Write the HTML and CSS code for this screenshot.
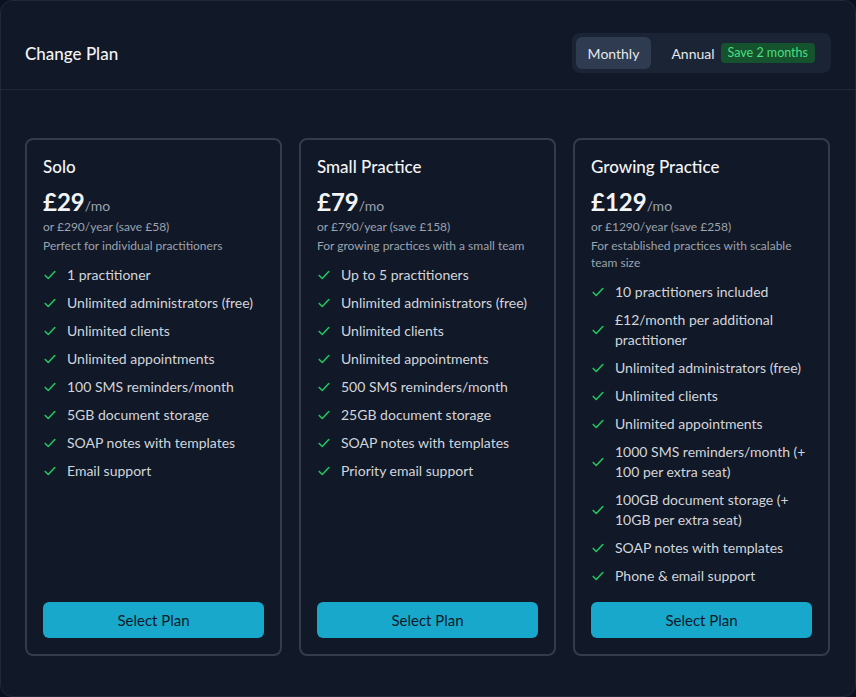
FILE: index.html
```html
<!DOCTYPE html>
<html lang="en">
<head>
    <meta charset="UTF-8">
    <meta name="viewport" content="width=device-width, initial-scale=1.0">
    <title>Change Plan</title>
    <link rel="stylesheet" href="styles.css">
</head>
<body>
    <div class="modal" role="dialog" aria-label="Change Plan">
        <div class="modal-header">
            <h2 class="modal-title">Change Plan</h2>
            <div class="billing-toggle" role="group" aria-label="Billing period">
                <button class="billing-option active">Monthly</button>
                <button class="billing-option">Annual <span class="save-badge">Save 2 months</span></button>
            </div>
        </div>

        <div class="plans">
            <div class="plan-card">
                <h3 class="plan-name">Solo</h3>
                <div class="plan-price">£29<span class="per">/mo</span></div>
                <p class="plan-yearly">or £290/year (save £58)</p>
                <p class="plan-desc">Perfect for individual practitioners</p>
                <ul class="features">
                    <li><svg class="check" viewBox="0 0 16 16"><path d="M2.5 8.5l3.5 3.5 7.5-8"/></svg><span>1 practitioner</span></li>
                    <li><svg class="check" viewBox="0 0 16 16"><path d="M2.5 8.5l3.5 3.5 7.5-8"/></svg><span>Unlimited administrators (free)</span></li>
                    <li><svg class="check" viewBox="0 0 16 16"><path d="M2.5 8.5l3.5 3.5 7.5-8"/></svg><span>Unlimited clients</span></li>
                    <li><svg class="check" viewBox="0 0 16 16"><path d="M2.5 8.5l3.5 3.5 7.5-8"/></svg><span>Unlimited appointments</span></li>
                    <li><svg class="check" viewBox="0 0 16 16"><path d="M2.5 8.5l3.5 3.5 7.5-8"/></svg><span>100 SMS reminders/month</span></li>
                    <li><svg class="check" viewBox="0 0 16 16"><path d="M2.5 8.5l3.5 3.5 7.5-8"/></svg><span>5GB document storage</span></li>
                    <li><svg class="check" viewBox="0 0 16 16"><path d="M2.5 8.5l3.5 3.5 7.5-8"/></svg><span>SOAP notes with templates</span></li>
                    <li><svg class="check" viewBox="0 0 16 16"><path d="M2.5 8.5l3.5 3.5 7.5-8"/></svg><span>Email support</span></li>
                </ul>
                <button class="select-btn">Select Plan</button>
            </div>

            <div class="plan-card">
                <h3 class="plan-name">Small Practice</h3>
                <div class="plan-price">£79<span class="per">/mo</span></div>
                <p class="plan-yearly">or £790/year (save £158)</p>
                <p class="plan-desc">For growing practices with a small team</p>
                <ul class="features">
                    <li><svg class="check" viewBox="0 0 16 16"><path d="M2.5 8.5l3.5 3.5 7.5-8"/></svg><span>Up to 5 practitioners</span></li>
                    <li><svg class="check" viewBox="0 0 16 16"><path d="M2.5 8.5l3.5 3.5 7.5-8"/></svg><span>Unlimited administrators (free)</span></li>
                    <li><svg class="check" viewBox="0 0 16 16"><path d="M2.5 8.5l3.5 3.5 7.5-8"/></svg><span>Unlimited clients</span></li>
                    <li><svg class="check" viewBox="0 0 16 16"><path d="M2.5 8.5l3.5 3.5 7.5-8"/></svg><span>Unlimited appointments</span></li>
                    <li><svg class="check" viewBox="0 0 16 16"><path d="M2.5 8.5l3.5 3.5 7.5-8"/></svg><span>500 SMS reminders/month</span></li>
                    <li><svg class="check" viewBox="0 0 16 16"><path d="M2.5 8.5l3.5 3.5 7.5-8"/></svg><span>25GB document storage</span></li>
                    <li><svg class="check" viewBox="0 0 16 16"><path d="M2.5 8.5l3.5 3.5 7.5-8"/></svg><span>SOAP notes with templates</span></li>
                    <li><svg class="check" viewBox="0 0 16 16"><path d="M2.5 8.5l3.5 3.5 7.5-8"/></svg><span>Priority email support</span></li>
                </ul>
                <button class="select-btn">Select Plan</button>
            </div>

            <div class="plan-card">
                <h3 class="plan-name">Growing Practice</h3>
                <div class="plan-price">£129<span class="per">/mo</span></div>
                <p class="plan-yearly">or £1290/year (save £258)</p>
                <p class="plan-desc">For established practices with scalable team size</p>
                <ul class="features">
                    <li><svg class="check" viewBox="0 0 16 16"><path d="M2.5 8.5l3.5 3.5 7.5-8"/></svg><span>10 practitioners included</span></li>
                    <li><svg class="check" viewBox="0 0 16 16"><path d="M2.5 8.5l3.5 3.5 7.5-8"/></svg><span>£12/month per additional practitioner</span></li>
                    <li><svg class="check" viewBox="0 0 16 16"><path d="M2.5 8.5l3.5 3.5 7.5-8"/></svg><span>Unlimited administrators (free)</span></li>
                    <li><svg class="check" viewBox="0 0 16 16"><path d="M2.5 8.5l3.5 3.5 7.5-8"/></svg><span>Unlimited clients</span></li>
                    <li><svg class="check" viewBox="0 0 16 16"><path d="M2.5 8.5l3.5 3.5 7.5-8"/></svg><span>Unlimited appointments</span></li>
                    <li><svg class="check" viewBox="0 0 16 16"><path d="M2.5 8.5l3.5 3.5 7.5-8"/></svg><span>1000 SMS reminders/month (+ 100 per extra seat)</span></li>
                    <li><svg class="check" viewBox="0 0 16 16"><path d="M2.5 8.5l3.5 3.5 7.5-8"/></svg><span>100GB document storage (+ 10GB per extra seat)</span></li>
                    <li><svg class="check" viewBox="0 0 16 16"><path d="M2.5 8.5l3.5 3.5 7.5-8"/></svg><span>SOAP notes with templates</span></li>
                    <li><svg class="check" viewBox="0 0 16 16"><path d="M2.5 8.5l3.5 3.5 7.5-8"/></svg><span>Phone &amp; email support</span></li>
                </ul>
                <button class="select-btn">Select Plan</button>
            </div>
        </div>
    </div>
</body>
</html>
```

FILE: styles.css
```css
* {
    box-sizing: border-box;
}

html, body {
    margin: 0;
    padding: 0;
    background-color: #0b1120;
}

body {
    font-family: Lato, "Noto Sans", sans-serif;
    color: #f3f4f6;
}

.modal {
    width: 856px;
    height: 697px;
    background-color: #111827;
    border: 1px solid #1f2937;
    border-radius: 12px;
    overflow: hidden;
}

.modal-header {
    display: flex;
    justify-content: space-between;
    align-items: center;
    padding: 32px 24px 16px 24px;
    border-bottom: 1px solid #1f2937;
}

.modal-title {
    margin: 0;
    font-size: 17px;
    font-weight: 500;
    color: #f3f4f6;
}

.billing-toggle {
    display: flex;
    gap: 8px;
    padding: 4px;
    background-color: #1b2435;
    border-radius: 8px;
}

.billing-option {
    display: flex;
    align-items: center;
    gap: 6px;
    height: 32px;
    padding: 0 12px;
    border: none;
    border-radius: 6px;
    background: transparent;
    color: #e5e7eb;
    font-family: inherit;
    font-size: 14px;
    cursor: pointer;
}

.billing-option.active {
    background-color: #2f3b50;
}

.save-badge {
    padding: 2px 7px;
    border-radius: 4px;
    background-color: #14532d;
    color: #4ade80;
    font-size: 12.5px;
    line-height: 16px;
}

.plans {
    display: grid;
    grid-template-columns: repeat(3, 257px);
    gap: 17px;
    padding: 48px 24px 0 24px;
}

.plan-card {
    display: flex;
    flex-direction: column;
    height: 518px;
    padding: 16px;
    border: 2px solid #323c4c;
    border-radius: 8px;
}

.plan-name {
    margin: 0;
    font-size: 17px;
    line-height: 22px;
    font-weight: 500;
}

.plan-price {
    margin-top: 10px;
    font-size: 24px;
    line-height: 27px;
    font-weight: 700;
}

.plan-price .per {
    font-size: 14px;
    font-weight: 400;
    color: #9ca3af;
}

.plan-yearly,
.plan-desc {
    margin: 0;
    font-size: 12px;
    color: #9ca3af;
}

.plan-yearly {
    line-height: 16px;
}

.plan-desc {
    margin-top: 2px;
    line-height: 17px;
}

.features {
    list-style: none;
    margin: 11px 0 0 0;
    padding: 0;
    display: flex;
    flex-direction: column;
    gap: 8px;
}

.features li {
    display: flex;
    align-items: center;
    gap: 10px;
    font-size: 14px;
    line-height: 20px;
    color: #d1d5db;
}

.check {
    flex-shrink: 0;
    width: 14px;
    height: 14px;
    fill: none;
    stroke: #22c55e;
    stroke-width: 1.8;
    stroke-linecap: round;
    stroke-linejoin: round;
}

.select-btn {
    margin-top: auto;
    height: 36px;
    border: none;
    border-radius: 6px;
    background-color: #17a8cc;
    color: #111827;
    font-family: inherit;
    font-size: 15px;
    cursor: pointer;
}
```
